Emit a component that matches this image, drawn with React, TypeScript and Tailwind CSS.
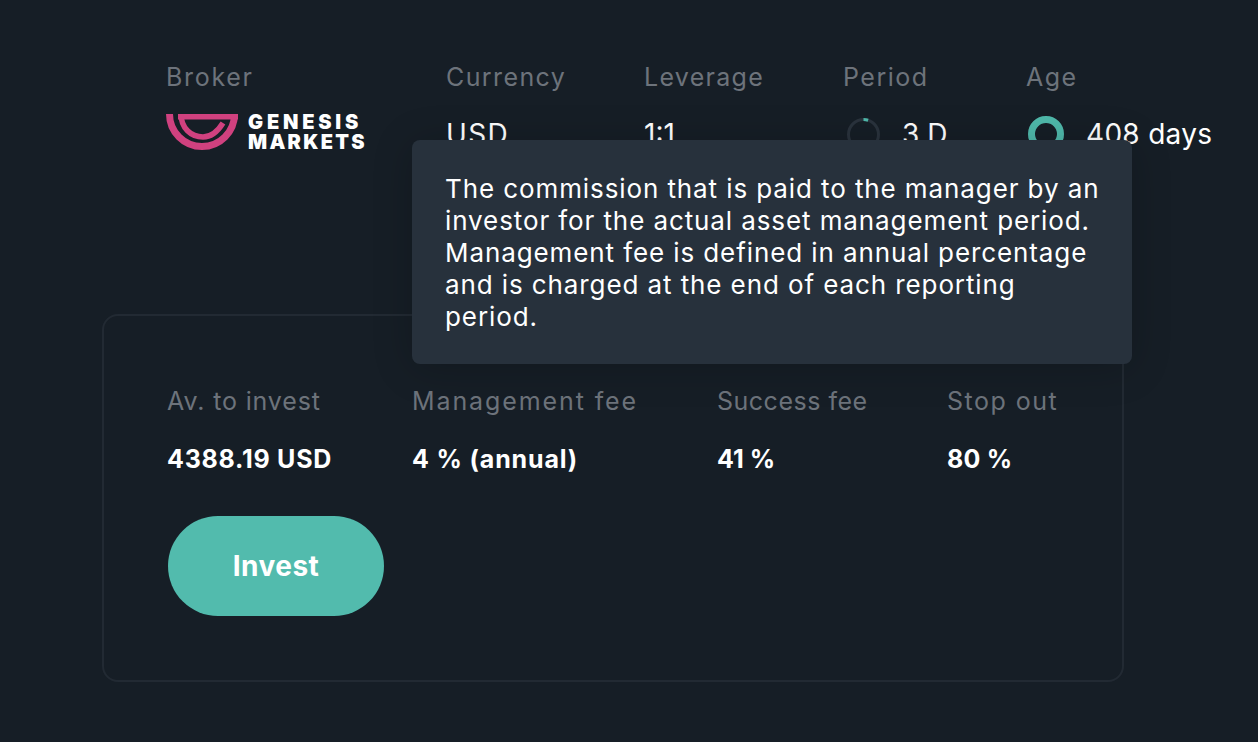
const font = { fontFamily: "Inter, 'Liberation Sans', sans-serif" };

function Meta({ label, labelClass, className, children }: { label: string; labelClass: string; className: string; children: React.ReactNode }) {
  return (
    <div className={className}>
      <div className={`text-[25px] leading-[32px] text-[#6d737b] ${labelClass}`}>{label}</div>
      <div className="mt-[23px] flex h-[36px] items-center text-[28px] text-white">{children}</div>
    </div>
  );
}

function Ring({ progress, size, sw, className }: { progress: number; size: number; sw: number; className: string }) {
  const r = size / 2 - sw / 2;
  const c = 2 * Math.PI * r;
  const m = size / 2;
  return (
    <svg width={size} height={size} viewBox={`0 0 ${size} ${size}`} className={`shrink-0 ${className}`}>
      <circle cx={m} cy={m} r={r} fill="none" stroke="#2a333d" strokeWidth={sw} />
      <circle
        cx={m}
        cy={m}
        r={r}
        fill="none"
        stroke="#4fb9ab"
        strokeWidth={sw}
        strokeDasharray={`${c * progress} ${c}`}
        transform={`rotate(-90 ${m} ${m})`}
      />
    </svg>
  );
}

function Stat({ label, value, labelClass, valueClass, className }: { label: string; value: string; labelClass: string; valueClass: string; className: string }) {
  return (
    <div className={className}>
      <div className={`text-[25px] leading-[32px] text-[#6d737b] ${labelClass}`}>{label}</div>
      <div className={`mt-[26px] text-[25px] leading-[32px] font-bold text-white ${valueClass}`}>{value}</div>
    </div>
  );
}

export default function App() {
  return (
    <div style={font} className="relative h-[742px] w-[1258px] overflow-hidden bg-[#161e26]">
      <div className="flex pl-[166px] pt-[61px]">
        <Meta label="Broker" labelClass="tracking-[1.7px]" className="w-[280px]">
          <div className="mb-[4px] flex items-center">
            <svg width="72" height="36" viewBox="0 0 72 36" className="shrink-0">
              <path d="M3.5 0A32.5 32.5 0 0 0 68.5 0" fill="none" stroke="#d0417f" strokeWidth="7" />
              <path d="M12 0H72V5.5H12Z" fill="#d0417f" />
              <path d="M15 0C15 14 25 23 37 23C45 23 52 17 57 9" fill="none" stroke="#d0417f" strokeWidth="5.5" />
            </svg>
            <div className="ml-[10px] text-[20px] leading-[20px] font-black text-white">
              <div className="tracking-[3.8px]">GENESIS</div>
              <div className="tracking-[2.3px]">MARKETS</div>
            </div>
          </div>
        </Meta>
        <Meta label="Currency" labelClass="tracking-[1.4px]" className="w-[198px]">
          <span className="tracking-[1.3px]">USD</span>
        </Meta>
        <Meta label="Leverage" labelClass="tracking-[1.3px]" className="w-[199px]">1:1</Meta>
        <Meta label="Period" labelClass="tracking-[1.5px]" className="w-[183px]">
          <Ring progress={0.05} size={33} sw={3} className="ml-[4px]" />
          <span className="ml-[22px]">3 D</span>
        </Meta>
        <Meta label="Age" labelClass="tracking-[1.5px]" className="w-[200px]">
          <Ring progress={1} size={36} sw={7} className="ml-[2px]" />
          <span className="ml-[22px] whitespace-nowrap tracking-[0.3px]">408 days</span>
        </Meta>
      </div>

      <div className="ml-[102px] mt-[162px] h-[368px] w-[1022px] rounded-[16px] border-2 border-[#222a33] pl-[63px] pt-[69px]">
        <div className="flex">
          <Stat label="Av. to invest" labelClass="tracking-[0.85px]" valueClass="tracking-[0.75px]" value="4388.19 USD" className="w-[245px]" />
          <Stat label="Management fee" labelClass="tracking-[1.9px]" valueClass="tracking-[0.85px]" value="4 % (annual)" className="w-[305px]" />
          <Stat label="Success fee" labelClass="tracking-[0.5px]" valueClass="tracking-[0px]" value="41 %" className="w-[230px]" />
          <Stat label="Stop out" labelClass="tracking-[1.5px]" valueClass="tracking-[0.2px]" value="80 %" className="w-[140px]" />
        </div>
        <button className="ml-[1px] mt-[41px] flex h-[100px] w-[216px] items-center justify-center rounded-[50px] bg-[#52bbad] text-[28px] font-bold tracking-[0.5px] text-white">
          Invest
        </button>
      </div>

      <div className="absolute left-[412px] top-[140px] h-[224px] w-[720px] rounded-[8px] bg-[#27313c] pl-[33px] pr-[31px] pt-[33px] text-[26px] leading-[32px] tracking-[0.9px] text-white shadow-[0_4px_40px_rgba(0,0,0,0.2)]">
        The commission that is paid to the manager by an investor for the actual asset management period. Management fee is defined in annual percentage and is charged at the end of each reporting period.
      </div>
    </div>
  );
}
